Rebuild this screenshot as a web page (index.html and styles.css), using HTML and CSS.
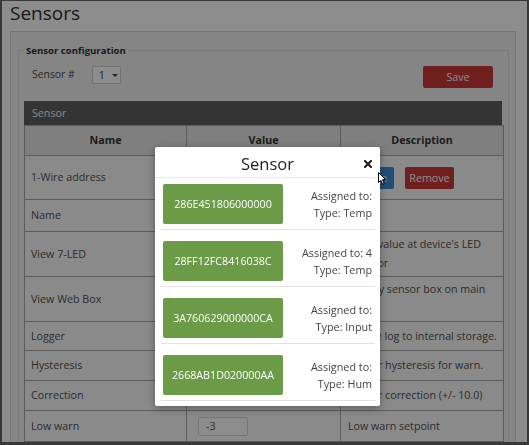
FILE: index.html
```html
<!DOCTYPE html>
<html>
<head>
<meta charset="utf-8">
<link rel="stylesheet" href="styles.css">
</head>
<body>
<div class="window">
  <h1 class="title">Sensors</h1>
  <div class="panel">
    <fieldset class="config">
      <legend>Sensor configuration</legend>
      <div class="config-row">
        <span class="config-label">Sensor #</span>
        <div class="select">1<span class="caret"></span></div>
        <button class="btn btn-red save">Save</button>
      </div>
      <div class="table-box">
        <div class="table-title">Sensor</div>
        <table class="grid">
          <colgroup><col class="c1"><col class="c2"><col class="c3"></colgroup>
          <thead>
            <tr class="h30"><th>Name</th><th>Value</th><th>Description</th></tr>
          </thead>
          <tbody>
            <tr class="h44"><td>1-Wire address</td><td></td><td><div class="btns"><button class="btn btn-blue assign">Assign</button><button class="btn btn-red remove">Remove</button></div></td></tr>
            <tr class="h32"><td>Name</td><td></td><td></td></tr>
            <tr class="h45"><td>View 7-LED</td><td></td><td>Show value at device's LED monitor</td></tr>
            <tr class="h45"><td>View Web Box</td><td></td><td>Display sensor box on main page</td></tr>
            <tr class="h29"><td>Logger</td><td></td><td>Enable log to internal storage.</td></tr>
            <tr class="h30"><td>Hysteresis</td><td></td><td>Sensor hysteresis for warn.</td></tr>
            <tr class="h30"><td>Correction</td><td></td><td>Sensor correction (+/- 10.0)</td></tr>
            <tr class="h31"><td>Low warn</td><td><span class="input">-3</span></td><td>Low warn setpoint</td></tr>
          </tbody>
        </table>
      </div>
    </fieldset>
  </div>
</div>

<div class="backdrop"></div>

<div class="modal">
  <div class="modal-header">
    <span class="modal-title">Sensor</span>
    <svg class="close" viewBox="0 0 8 8" width="8" height="8"><path d="M1 1 L7 7 M7 1 L1 7" stroke="#1e1e1e" stroke-width="2.1" stroke-linecap="square"/></svg>
  </div>
  <div class="modal-list">
    <div class="item">
      <button class="btn btn-green">286E451806000000</button>
      <div class="info"><div>Assigned to:</div><div>Type: Temp</div></div>
    </div>
    <div class="item">
      <button class="btn btn-green">28FF12FC8416038C</button>
      <div class="info"><div>Assigned to: 4</div><div>Type: Temp</div></div>
    </div>
    <div class="item">
      <button class="btn btn-green">3A760629000000CA</button>
      <div class="info"><div>Assigned to:</div><div>Type: Input</div></div>
    </div>
    <div class="item">
      <button class="btn btn-green">2668AB1D020000AA</button>
      <div class="info"><div>Assigned to:</div><div>Type: Hum</div></div>
    </div>
  </div>
</div>

<svg class="cursor" viewBox="0 0 9 14" width="9" height="14"><path d="M0.5 0.5 L0.5 10.5 L2.8 8.3 L4.6 12.3 L6.2 11.6 L4.5 7.7 L7.6 7.7 Z" fill="#fff" stroke="#000" stroke-width="1"/></svg>
</body>
</html>
```

FILE: styles.css
```css
body {
  margin: 0;
  font-family: "Open Sans", "Noto Sans", sans-serif;
  background: #fff;
}

.window {
  box-sizing: border-box;
  width: 529px;
  height: 445px;
  border-style: solid;
  border-color: #666;
  border-width: 1px 2px 3px 2px;
  overflow: hidden;
}

.title {
  margin: 0 0 6px 8px;
  font-size: 19px;
  font-weight: normal;
  line-height: 24px;
  color: #2e2e2e;
}

.panel {
  box-sizing: border-box;
  height: 430px;
  margin: 0 11px 0 8px;
  padding: 12px 6px 0 7px;
  border: 1px solid #d8d8d8;
  background: #f2f2f2;
}

.config {
  margin: 0;
  padding: 0 6px 20px 5px;
  min-width: 0;
  border: 1px solid #dedede;
}

.config legend {
  padding: 0 2px;
  font-size: 9.6px;
  font-weight: bold;
  line-height: 13px;
  color: #2e2e2e;
}

.config-row {
  display: flex;
  align-items: flex-start;
  height: 22px;
  margin-top: 9px;
  padding-left: 8px;
}

.config-row .config-label {
  font-size: 10.4px;
  line-height: 17px;
  color: #4a4a4a;
}

.select {
  box-sizing: border-box;
  display: flex;
  align-items: center;
  width: 29px;
  height: 18px;
  margin-left: 17px;
  padding-left: 6px;
  border: 1px solid #d0d0d0;
  border-radius: 2px;
  background: #fff;
  font-size: 10.7px;
  color: #444;
}

.caret {
  width: 0;
  height: 0;
  margin-left: 7px;
  border-left: 3px solid transparent;
  border-right: 3px solid transparent;
  border-top: 3px solid #444;
}

.btn {
  border: none;
  border-radius: 2px;
  font-family: inherit;
  font-size: 10.7px;
  color: #fff;
  padding: 0;
}

.btn-red {
  background: #c93a38;
}

.btn-blue {
  background: #3a8fdc;
}

.btn-green {
  background: #6b9b47;
}

.save {
  width: 70px;
  height: 22px;
  margin-left: auto;
  margin-right: 9px;
}

.table-box {
  margin-top: 13px;
}

.table-title {
  height: 24px;
  padding-left: 8px;
  background: #606060;
  color: #f4f4f4;
  font-size: 10.7px;
  line-height: 24px;
}

.grid {
  width: 479px;
  border-collapse: collapse;
  table-layout: fixed;
  font-size: 10.7px;
  color: #505050;
}

.grid .c1 { width: 162px; }
.grid .c2 { width: 154px; }
.grid .c3 { width: 163px; }

.grid th,
.grid td {
  border: 1px solid #a8a8a8;
  padding: 0 6px;
  line-height: 19px;
  vertical-align: middle;
}

.grid td:nth-child(3) {
  padding-left: 7px;
}

.grid th {
  background: #e8e8e8;
  color: #333;
  font-weight: bold;
  text-align: center;
}

.grid td {
  background: #fbfbfb;
}

.h29 { height: 29px; }
.h30 { height: 30px; }
.h31 { height: 31px; }
.h32 { height: 32px; }
.h44 { height: 44px; }
.h45 { height: 45px; }

.input {
  box-sizing: border-box;
  display: inline-block;
  width: 50px;
  height: 19px;
  margin-left: 5px;
  padding-left: 7px;
  border: 1px solid #d6d6d6;
  border-radius: 2px;
  background: #fff;
  line-height: 17px;
  color: #555;
}

.btns {
  display: flex;
  gap: 11px;
}

.assign {
  width: 46px;
  height: 22px;
}

.remove {
  width: 49px;
  height: 22px;
}

.backdrop {
  position: fixed;
  inset: 0;
  background: rgba(0, 0, 0, 0.45);
}

.modal {
  position: absolute;
  left: 155px;
  top: 147px;
  box-sizing: border-box;
  width: 225px;
  height: 259px;
  background: #fff;
  border-radius: 2px;
  box-shadow: 0 2px 8px rgba(0, 0, 0, 0.35);
}

.modal-header {
  position: relative;
  height: 30px;
  border-bottom: 1px solid #e5e5e5;
  text-align: center;
}

.modal-title {
  font-size: 16.5px;
  line-height: 34px;
  color: #1e1e1e;
}

.close {
  position: absolute;
  right: 8px;
  top: 13px;
}

.modal-list {
  padding: 6px 5px 0 6px;
}

.item {
  display: flex;
  align-items: center;
  justify-content: space-between;
  padding: 0 3px 5px 2px;
  margin-bottom: 11px;
  border-bottom: 1px solid #e2e2e2;
}

.item:last-child {
  margin-bottom: 0;
}

.item .btn-green {
  width: 120px;
  height: 40px;
}

.info {
  font-size: 10.8px;
  line-height: 17px;
  color: #444;
  text-align: right;
}

.cursor {
  position: absolute;
  left: 378px;
  top: 172px;
}
```
